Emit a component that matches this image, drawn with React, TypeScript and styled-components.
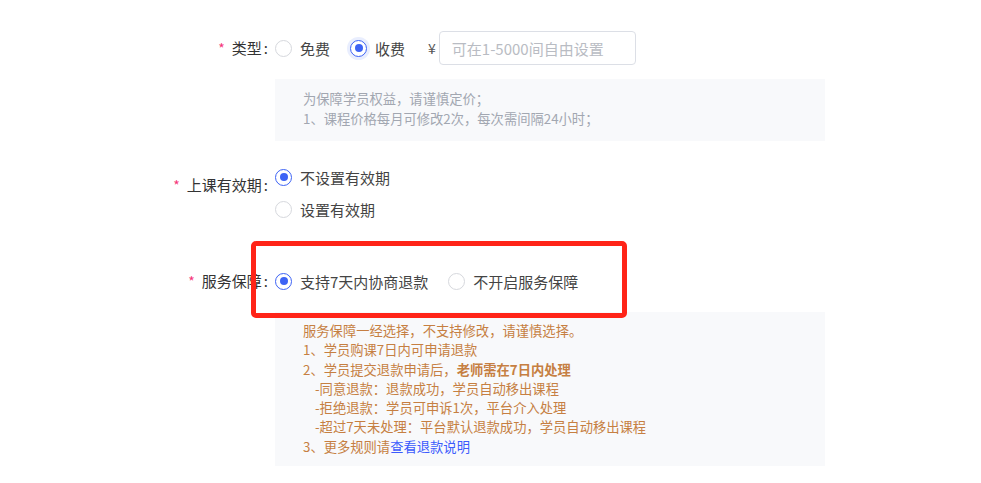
import React from 'react';
import styled, { createGlobalStyle } from 'styled-components';

const GlobalStyle = createGlobalStyle`
  body {
    margin: 0;
    background: #fff;
    font-family: "Noto Sans CJK SC", "Noto Sans", sans-serif;
    color: #333;
  }
`;

const Form = styled.div`
  width: 981px;
  padding-top: 28px;
`;

const Row = styled.div<{ $top?: number }>`
  position: relative;
  display: flex;
  align-items: flex-start;
  margin-top: ${p => p.$top ?? 0}px;
`;

const Label = styled.div<{ $pad?: number }>`
  width: 268px;
  flex: none;
  text-align: right;
  font-size: 15px;
  line-height: 40px;
  padding-top: ${p => p.$pad ?? 0}px;
  color: #333;
  white-space: nowrap;
`;

const Star = styled.span`
  color: #f5367a;
  margin-right: 7px;
  font-size: 14px;
`;

const Colon = styled.span`
  margin-left: 2px;
`;

const Content = styled.div`
  margin-left: 7px;
  display: flex;
  flex-direction: column;
`;

const RadioLine = styled.div`
  display: flex;
  align-items: center;
  height: 40px;
`;

const RadioStack = styled.div`
  display: flex;
  flex-direction: column;
`;

const StackItem = styled.div`
  display: flex;
  align-items: center;
  height: 32px;
`;

const Option = styled.label`
  display: inline-flex;
  align-items: center;
  margin-right: 20px;
  font-size: 15px;
  color: #444;
  cursor: pointer;
`;

const Circle = styled.span<{ $on?: boolean; $focus?: boolean }>`
  width: 17px;
  height: 17px;
  box-sizing: border-box;
  border-radius: 50%;
  border: 1px solid ${p => (p.$on ? '#3d63f5' : '#d6d8dd')};
  background: #fff;
  display: inline-flex;
  align-items: center;
  justify-content: center;
  margin-right: 8px;
  box-shadow: ${p => (p.$focus ? '0 0 0 3px #e9eefe' : 'none')};
  &::after {
    content: '';
    width: 8px;
    height: 8px;
    border-radius: 50%;
    background: #3d63f5;
    display: ${p => (p.$on ? 'block' : 'none')};
  }
`;

const Yen = styled.span`
  font-size: 14px;
  color: #555;
  margin-left: 3px;
  margin-right: 3px;
`;

const PriceInput = styled.input`
  width: 197px;
  height: 34px;
  box-sizing: border-box;
  border: 1px solid #dcdfe6;
  border-radius: 4px;
  padding: 0 12px;
  font-size: 15px;
  font-family: inherit;
  color: #333;
  outline: none;
  &::placeholder {
    color: #b9bcc3;
  }
`;

const Tips = styled.div<{ $tone?: 'gray' | 'warn' }>`
  margin-left: 275px;
  width: 550px;
  box-sizing: border-box;
  background: #f8f9fb;
  padding: ${p => (p.$tone === 'warn' ? '9px 28px 10px' : '10px 28px 12px')};
  font-size: 13.3px;
  line-height: ${p => (p.$tone === 'warn' ? '19.3px' : '20px')};
  color: ${p => (p.$tone === 'warn' ? '#c67f42' : '#a2a7b1')};
`;

const Line = styled.div<{ $indent?: boolean }>`
  padding-left: ${p => (p.$indent ? 12 : 0)}px;
  white-space: nowrap;
`;

const Strong = styled.b`
  font-weight: 700;
`;

const Link = styled.a`
  color: #3b5bfd;
  text-decoration: none;
`;

const Highlight = styled.div`
  position: absolute;
  left: 251px;
  top: -20px;
  width: 376px;
  height: 77px;
  box-sizing: border-box;
  border: 5px solid #ff2418;
  border-radius: 5px;
  pointer-events: none;
`;

const Radio = ({ on, focus, children }: { on?: boolean; focus?: boolean; children: React.ReactNode }) => (
  <Option>
    <Circle $on={on} $focus={focus} />
    {children}
  </Option>
);

const FieldLabel = ({ text, pad }: { text: string; pad?: number }) => (
  <Label $pad={pad}>
    <Star>*</Star>
    {text}
    <Colon>:</Colon>
  </Label>
);

export default function App() {
  return (
    <>
      <GlobalStyle />
      <Form>
        <Row>
          <FieldLabel text="类型" />
          <Content>
            <RadioLine>
              <Radio>免费</Radio>
              <Radio on focus>收费</Radio>
              <Yen>¥</Yen>
              <PriceInput placeholder="可在1-5000间自由设置" />
            </RadioLine>
          </Content>
        </Row>
        <Tips $tone="gray" style={{ marginTop: 11 }}>
          <Line>为保障学员权益，请谨慎定价；</Line>
          <Line>1、课程价格每月可修改2次，每次需间隔24小时；</Line>
        </Tips>

        <Row $top={20}>
          <FieldLabel text="上课有效期" pad={4} />
          <Content>
            <RadioStack>
              <StackItem>
                <Radio on>不设置有效期</Radio>
              </StackItem>
              <StackItem>
                <Radio>设置有效期</Radio>
              </StackItem>
            </RadioStack>
          </Content>
        </Row>

        <Row $top={36}>
          <FieldLabel text="服务保障" />
          <Content>
            <RadioLine>
              <Radio on>支持7天内协商退款</Radio>
              <Radio>不开启服务保障</Radio>
            </RadioLine>
          </Content>
          <Highlight />
        </Row>
        <Tips $tone="warn" style={{ marginTop: 11 }}>
          <Line>服务保障一经选择，不支持修改，请谨慎选择。</Line>
          <Line>1、学员购课7日内可申请退款</Line>
          <Line>
            2、学员提交退款申请后，<Strong>老师需在7日内处理</Strong>
          </Line>
          <Line $indent>-同意退款：退款成功，学员自动移出课程</Line>
          <Line $indent>-拒绝退款：学员可申诉1次，平台介入处理</Line>
          <Line $indent>-超过7天未处理：平台默认退款成功，学员自动移出课程</Line>
          <Line>
            3、更多规则请<Link href="#">查看退款说明</Link>
          </Line>
        </Tips>
      </Form>
    </>
  );
}
